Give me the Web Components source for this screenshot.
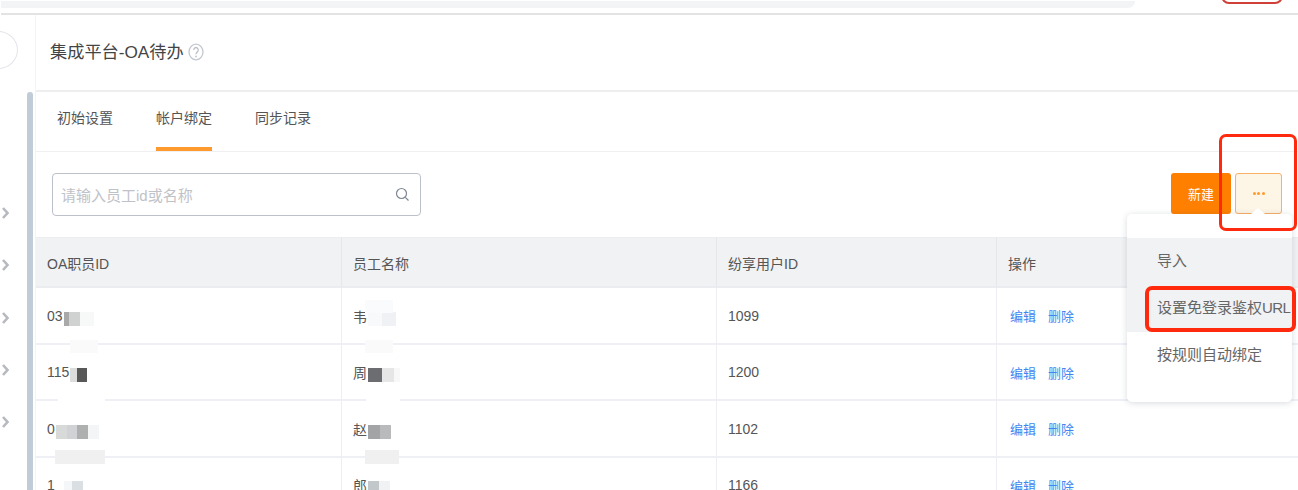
<!DOCTYPE html>
<html lang="zh">
<head>
<meta charset="utf-8">
<title>集成平台-OA待办</title>
<style>
  html, body { margin: 0; background: #fff; }
  body {
    font-family: "Liberation Sans", "Noto Sans CJK SC", sans-serif;
    color: #555;
    height: 490px;
    overflow: hidden;
  }
</style>
</head>
<body>
<oa-page>
  <oa-header>集成平台-OA待办</oa-header>
  <oa-tabs></oa-tabs>
  <oa-toolbar></oa-toolbar>
  <oa-table></oa-table>
</oa-page>
<more-menu></more-menu>

<script>
class OaPage extends HTMLElement {
  constructor() {
    super();
    this.attachShadow({ mode: "open" });
    const chevron = `<svg width="8" height="12" viewBox="0 0 8 12"><path d="M1 1 5.500 6 1 11" fill="none" stroke="#b6b9be" stroke-width="2.600"/></svg>`;
    this.shadowRoot.innerHTML = `
      <style>
        :host { display: block; height: 490px; overflow: hidden; }
        .top { height: 13px; border-bottom: 2px solid #e3e3e3; margin-left: 1px; position: relative; overflow: hidden; }
        .strip { height: 7px; margin: 1px 163px 0 0; background: #f3f4f6; border-radius: 0 0 12px 0; }
        .alert { position: absolute; left: 1220px; top: -12px; width: 58px; height: 12px; border: 2px solid #cf4039; border-radius: 8px; }
        .body { display: flex; height: 475px; }
        .rail { width: 35px; flex: none; position: relative; overflow: hidden; }
        .circle { position: absolute; left: -22px; top: 16px; width: 38px; height: 36px; border: 1px solid #e2e4ea; border-radius: 50%; }
        .chevrons { position: absolute; left: 2px; top: 192px; display: flex; flex-direction: column; gap: 40.250px; }
        .chevrons svg { display: block; }
        .bar { position: absolute; left: 27px; top: 77px; bottom: 0; width: 6px; background: #c0ccd8; border-radius: 3px 3px 0 0; }
        .main { flex: 1; min-width: 0; border-left: 1px solid #f4f4f6; }
      </style>
      <div class="top"><div class="strip"></div><div class="alert"></div></div>
      <div class="body">
        <div class="rail">
          <div class="circle"></div>
          <div class="chevrons">${chevron.repeat(5)}</div>
          <div class="bar"></div>
        </div>
        <div class="main"><slot></slot></div>
      </div>
    `;
  }
}

class OaHeader extends HTMLElement {
  constructor() {
    super();
    this.attachShadow({ mode: "open" });
    this.shadowRoot.innerHTML = `
      <style>
        :host { display: flex; align-items: center; gap: 4px; height: 75px; box-sizing: content-box; padding-left: 14px; border-bottom: 2px solid #eeeeee; font-size: 17.200px; color: #444; }
        .title { margin-bottom: 4px; }
        svg { display: block; margin-bottom: 1px; }
      </style>
      <span class="title"><slot></slot></span>
      <svg width="16" height="18" viewBox="0 0 16 16" preserveAspectRatio="none">
        <circle cx="8" cy="8" r="7" fill="none" stroke="#c4c8d0" stroke-width="1.300"/>
        <path d="M5.800 6.300a2.200 2.200 0 1 1 3.400 1.800c-.8.500-1.200 1-1.200 1.900" fill="none" stroke="#b9bdc6" stroke-width="1.200"/>
        <circle cx="8" cy="12" r=".8" fill="#b9bdc6"/>
      </svg>
    `;
  }
}

class OaTabs extends HTMLElement {
  constructor() {
    super();
    this.attachShadow({ mode: "open" });
    const tabs = ["初始设置", "帐户绑定", "同步记录"];
    this.shadowRoot.innerHTML = `
      <style>
        :host { display: flex; gap: 43px; height: 59px; padding-left: 21px; border-bottom: 1px solid #f0f0f2; font-size: 14px; color: #555; }
        .tab { height: 59px; line-height: 53px; box-sizing: border-box; white-space: nowrap; }
        .on { border-bottom: 4px solid #ff9a2e; }
      </style>
      ${tabs.map((t, i) => `<div class="tab ${i === 1 ? "on" : ""}">${t}</div>`).join("")}
    `;
  }
}

class OaToolbar extends HTMLElement {
  constructor() {
    super();
    this.attachShadow({ mode: "open" });
    this.shadowRoot.innerHTML = `
      <style>
        :host { display: flex; justify-content: space-between; align-items: flex-start; height: 85px; box-sizing: border-box; padding: 21px 16px 0 16px; }
        .search { width: 369px; height: 43px; box-sizing: border-box; border: 1px solid #bcc0c8; border-radius: 4px; display: flex; align-items: center; justify-content: space-between; padding: 0 10px 0 8px; font-size: 15px; color: #bfc2c8; }
        .btns { display: flex; gap: 4px; }
        .add { width: 60px; height: 41px; background: #ff8000; color: #fff; border-radius: 3px; font-size: 13px; display: flex; align-items: center; justify-content: center; }
        .more { width: 47px; height: 41px; box-sizing: border-box; background: #fdf5e6; border: 1px solid #f9b165; border-radius: 3px; display: flex; align-items: center; justify-content: center; gap: 1.500px; }
        .more i { width: 3px; height: 3px; border-radius: 50%; background: #ff9a2e; }
        svg { display: block; }
      </style>
      <div class="search">
        <span>请输入员工id或名称</span>
        <svg width="15" height="15" viewBox="0 0 15 15"><circle cx="6.500" cy="6.500" r="5" fill="none" stroke="#7f8794" stroke-width="1.200"/><path d="m10.300 10.300 3.200 3.200" stroke="#7f8794" stroke-width="1.200"/></svg>
      </div>
      <div class="btns">
        <div class="add">新建</div>
        <div class="more"><i></i><i></i><i></i></div>
      </div>
    `;
  }
}

class OaTable extends HTMLElement {
  constructor() {
    super();
    this.attachShadow({ mode: "open" });
    // blocks are the pixelated parts of redacted values: [width, colour]
    const rows = [
      { id: "03", idBlur: [[5, "#a9a9a9"], [11, "#d0d2d2"], [14, "#f7f8f8"]], name: "韦", nameBlur: [[14, "#f8f9fa"], [14, "#eff1f5"]], uid: "1099" },
      { id: "115", idBlur: [[7, "#dcdcdc"], [10, "#585858"]], name: "周", nameBlur: [[14, "#6b6d70"], [12, "#e6e6e6"], [6, "#f8f8f8"]], uid: "1200" },
      { id: "0", idBlur: [[11, "#d8dada"], [10, "#d0d2d5"], [11, "#aeb0b0"], [11, "#f4f5f7"]], name: "赵", nameBlur: [[12, "#a3a4a6"], [11, "#b9babb"]], uid: "1102" },
      { id: "1", idBlur: [[8, "#fff"], [8, "#f4f6f8"], [11, "#d9dfe3"]], name: "郎", nameBlur: [[11, "#c2c7ca"], [11, "#f1f2f4"]], uid: "1166" },
    ];
    const blocks = (list) =>
      list.map(([w, c]) => `<i style="width:${w}px;background:${c}"></i>`).join("");
    // pale smears the redaction left on the row lines
    const smears = [
      [70, 340, 28, 13, "#fafafb"], [58, 397, 47, 8, "#fff"], [55, 450, 50, 14, "#f0f0f1"],
      [365, 300, 28, 13, "#fafbfc"], [365, 340, 28, 13, "#fafafb"], [366, 397, 34, 8, "#fff"], [365, 450, 34, 14, "#f0f0f1"],
    ];
    this.shadowRoot.innerHTML = `
      <style>
        :host { display: block; position: relative; font-size: 14px; color: #555; }
        .grid { display: grid; grid-template-columns: 306px 375px 280px 1fr; }
        .cell { box-sizing: border-box; height: 56.500px; padding: 1px 0 0 11px; display: flex; align-items: center; border-right: 1px solid #eceef4; border-bottom: 2px solid #eef0f6; white-space: nowrap; }
        .head { height: 51px; background: #f1f2f4; border-top: 1px solid #eceef0; border-right-color: #e6e7ea; border-bottom-color: #ebecef; }
        .cell:nth-child(4n) { border-right: 0; }
        .blur { display: inline-flex; height: 14px; margin: 6px 0 0 1px; }
        .blur i { display: block; height: 14px; }
        a { color: #3f86f0; text-decoration: none; font-size: 13px; margin-left: 2px; margin-right: 10px; }
        .smear { position: absolute; }
      </style>
      <div class="grid">
        <div class="cell head">OA职员ID</div>
        <div class="cell head">员工名称</div>
        <div class="cell head">纷享用户ID</div>
        <div class="cell head">操作</div>
        ${rows.map((r) => `
          <div class="cell">${r.id}<span class="blur">${blocks(r.idBlur)}</span></div>
          <div class="cell">${r.name}<span class="blur">${blocks(r.nameBlur)}</span></div>
          <div class="cell">${r.uid}</div>
          <div class="cell"><a>编辑</a><a>删除</a></div>
        `).join("")}
      </div>
      ${smears.map(([x, y, w, h, c]) => `<div class="smear" style="left:${x - 36}px;top:${y - 237}px;width:${w}px;height:${h}px;background:${c}"></div>`).join("")}
    `;
  }
}

class MoreMenu extends HTMLElement {
  constructor() {
    super();
    this.attachShadow({ mode: "open" });
    this.shadowRoot.innerHTML = `
      <style>
        :host { display: block; position: absolute; left: 0; top: 0; font-size: 15px; color: #666; }
        .menu { position: absolute; left: 1127px; top: 214px; width: 165px; height: 188px; box-sizing: border-box; background: #fff; border-radius: 5px; box-shadow: 0 1px 6px rgba(60,70,90,.2); padding-top: 24px; white-space: nowrap; }
        .menu::before { content: ""; position: absolute; left: 124px; top: -6px; border: 7px solid transparent; border-top: 0; border-bottom: 6px solid #fff; }
        .item { height: 47px; line-height: 46px; padding-left: 30px; }
        .hover { background: #f1f2f4; }
        .url { letter-spacing: -.6px; }
        .mark { position: absolute; box-sizing: border-box; border-style: solid; border-color: #ff2a0d; }
        .mark.big { left: 1219px; top: 134px; width: 78px; height: 97px; border-width: 3px; border-radius: 7px; }
        .mark.row { left: 1145px; top: 286px; width: 151px; height: 46px; border-width: 4px; border-radius: 7px; }
      </style>
      <div class="menu">
        <div class="item hover">导入</div>
        <div class="item hover">设置免登录鉴权<span class="url">URL</span></div>
        <div class="item">按规则自动绑定</div>
      </div>
      <div class="mark big"></div>
      <div class="mark row"></div>
    `;
  }
}

customElements.define("oa-page", OaPage);
customElements.define("oa-header", OaHeader);
customElements.define("oa-tabs", OaTabs);
customElements.define("oa-toolbar", OaToolbar);
customElements.define("oa-table", OaTable);
customElements.define("more-menu", MoreMenu);
</script>
</body>
</html>
